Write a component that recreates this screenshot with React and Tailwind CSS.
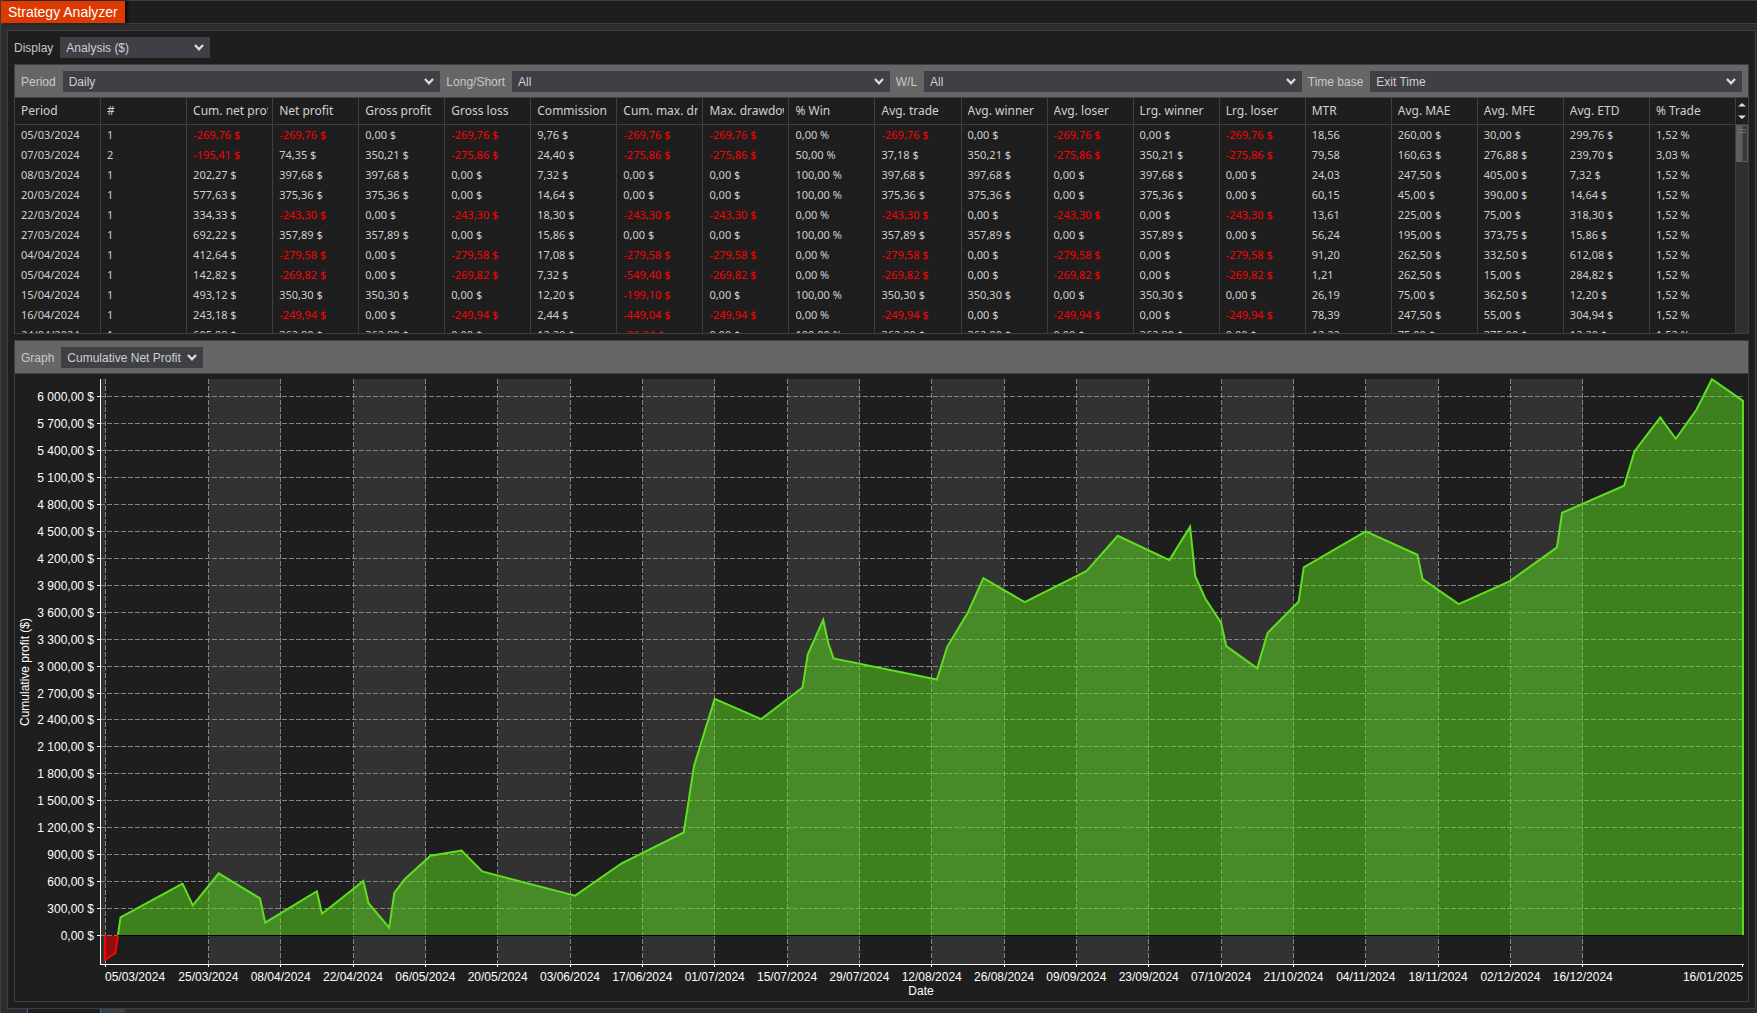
import clsx from 'clsx'

const COLUMNS = [
  'Period', '#', 'Cum. net profit', 'Net profit', 'Gross profit', 'Gross loss', 'Commission',
  'Cum. max. drawdown', 'Max. drawdown', '% Win', 'Avg. trade', 'Avg. winner', 'Avg. loser',
  'Lrg. winner', 'Lrg. loser', 'MTR', 'Avg. MAE', 'Avg. MFE', 'Avg. ETD', '% Trade',
]

// period, count, cum, net, commission, cum dd, % win, avg trade, winner, loser, MTR, MAE, MFE, ETD, % trade
const TRADES = [
  ['05/03/2024', '1', '-269,76', '-269,76', '9,76', '-269,76', '0,00', '-269,76', '0,00', '-269,76', '18,56', '260,00', '30,00', '299,76', '1,52'],
  ['07/03/2024', '2', '-195,41', '74,35', '24,40', '-275,86', '50,00', '37,18', '350,21', '-275,86', '79,58', '160,63', '276,88', '239,70', '3,03'],
  ['08/03/2024', '1', '202,27', '397,68', '7,32', '0,00', '100,00', '397,68', '397,68', '0,00', '24,03', '247,50', '405,00', '7,32', '1,52'],
  ['20/03/2024', '1', '577,63', '375,36', '14,64', '0,00', '100,00', '375,36', '375,36', '0,00', '60,15', '45,00', '390,00', '14,64', '1,52'],
  ['22/03/2024', '1', '334,33', '-243,30', '18,30', '-243,30', '0,00', '-243,30', '0,00', '-243,30', '13,61', '225,00', '75,00', '318,30', '1,52'],
  ['27/03/2024', '1', '692,22', '357,89', '15,86', '0,00', '100,00', '357,89', '357,89', '0,00', '56,24', '195,00', '373,75', '15,86', '1,52'],
  ['04/04/2024', '1', '412,64', '-279,58', '17,08', '-279,58', '0,00', '-279,58', '0,00', '-279,58', '91,20', '262,50', '332,50', '612,08', '1,52'],
  ['05/04/2024', '1', '142,82', '-269,82', '7,32', '-549,40', '0,00', '-269,82', '0,00', '-269,82', '1,21', '262,50', '15,00', '284,82', '1,52'],
  ['15/04/2024', '1', '493,12', '350,30', '12,20', '-199,10', '100,00', '350,30', '350,30', '0,00', '26,19', '75,00', '362,50', '12,20', '1,52'],
  ['16/04/2024', '1', '243,18', '-249,94', '2,44', '-449,04', '0,00', '-249,94', '0,00', '-249,94', '78,39', '247,50', '55,00', '304,94', '1,52'],
  ['24/04/2024', '1', '605,98', '362,80', '12,20', '-86,24', '100,00', '362,80', '362,80', '0,00', '12,22', '75,00', '375,00', '12,20', '1,52'],
]

function toCells(t) {
  const [period, count, cum, net, comm, cumDd, win, avg, winner, loser, mtr, mae, mfe, etd, share] = t
  const usd = (v) => v + ' $'
  return [
    period, count, usd(cum), usd(net), usd(winner), usd(loser), usd(comm), usd(cumDd), usd(loser),
    win + ' %', usd(avg), usd(winner), usd(loser), usd(winner), usd(loser), mtr,
    usd(mae), usd(mfe), usd(etd), share + ' %',
  ]
}

// [days since the first trade, cumulative net profit]
const PROFIT = [
  [0, -269.76], [2, -195.41], [3, 202.27], [15, 577.63], [17, 334.33], [22, 692.22], [30, 412.64],
  [31, 142.82], [41, 493.12], [42, 243.18], [50, 605.98], [51, 359], [55, 88], [56, 475], [58, 627],
  [63, 889], [69, 947], [73, 713], [91, 444], [100, 804], [112, 1147], [114, 1889], [118, 2635],
  [127, 2410], [135, 2762], [136, 3129], [139, 3514], [140, 3252], [141, 3086], [161, 2850],
  [163, 3215], [167, 3597], [170, 3980], [178, 3712], [190, 4061], [196, 4451], [206, 4180],
  [210, 4551], [211, 4002], [213, 3746], [216, 3483], [217, 3223], [223, 2975], [225, 3369],
  [231, 3716], [232, 4100], [244, 4500], [254, 4240], [255, 3969], [262, 3690], [272, 3950],
  [281, 4322], [282, 4707], [294, 5008], [296, 5390], [301, 5769], [304, 5531], [308, 5855],
  [311, 6194], [317, 5954],
]

const DATES = [
  [0, '05/03/2024'], [20, '25/03/2024'], [34, '08/04/2024'], [48, '22/04/2024'], [62, '06/05/2024'],
  [76, '20/05/2024'], [90, '03/06/2024'], [104, '17/06/2024'], [118, '01/07/2024'], [132, '15/07/2024'],
  [146, '29/07/2024'], [160, '12/08/2024'], [174, '26/08/2024'], [188, '09/09/2024'], [202, '23/09/2024'],
  [216, '07/10/2024'], [230, '21/10/2024'], [244, '04/11/2024'], [258, '18/11/2024'], [272, '02/12/2024'],
  [286, '16/12/2024'],
]
const LAST_DAY = 317

const AXIS_X = 85
const TOP = 5
const BOTTOM = 590
const ZERO = 561

const px = (day) => 90 + day * 5.167
const py = (value) => ZERO + 0.5 - value * 0.0898
const snap = (n) => Math.floor(n) + 0.5

function money(v) {
  const s = v >= 1000 ? `${Math.floor(v / 1000)} ${String(v % 1000).padStart(3, '0')}` : String(v)
  return s + ',00 $'
}

function ProfitChart() {
  const line = PROFIT.map(([d, v]) => `L${px(d)} ${py(v)}`).join('')
  const path = `M${px(0)} ${py(0)}${line}L${px(LAST_DAY)} ${py(0)}`
  const levels = Array.from({ length: 21 }, (_, i) => i * 300)
  const bands = []
  for (let i = 1; i < DATES.length - 1; i += 2) bands.push([DATES[i][0], DATES[i + 1][0]])

  return (
    <svg
      viewBox="0 0 1733 627"
      className="block w-full font-['Liberation_Sans',sans-serif] text-[12px]"
      role="img"
      aria-label="Cumulative profit by date"
    >
      <defs>
        <clipPath id="gain">
          <rect x="0" y="0" width="1733" height={ZERO} />
        </clipPath>
        <clipPath id="loss">
          <rect x="0" y={ZERO} width="1733" height="66" />
        </clipPath>
      </defs>

      <g fill="#323232" shapeRendering="crispEdges">
        <rect x={AXIS_X} y={TOP} width="5" height={BOTTOM - TOP} />
        {bands.map(([a, b]) => (
          <rect key={a} x={snap(px(a))} y={TOP} width={px(b) - px(a)} height={BOTTOM - TOP} />
        ))}
      </g>

      <g stroke="#848484" strokeDasharray="5 2" shapeRendering="crispEdges">
        {levels.map((v) => (
          <line key={v} x1={AXIS_X} x2={px(LAST_DAY)} y1={snap(py(v))} y2={snap(py(v))} />
        ))}
        {DATES.map(([d]) => (
          <line key={d} x1={snap(px(d))} x2={snap(px(d))} y1={TOP} y2={BOTTOM} />
        ))}
      </g>

      <g clipPath="url(#gain)">
        <path d={path} fill="#5ee01e" fillOpacity="0.5" />
        <path d={path} fill="none" stroke="#5ee01e" strokeWidth="2" />
      </g>
      <g clipPath="url(#loss)">
        <path d={path} fill="#ff0000" fillOpacity="0.5" />
        <path d={path} fill="none" stroke="#ff0000" strokeWidth="2" />
      </g>
      <line x1="103" x2={px(LAST_DAY)} y1={ZERO + 0.5} y2={ZERO + 0.5} stroke="#000" />

      <g stroke="#fff" shapeRendering="crispEdges">
        <line x1={AXIS_X + 0.5} x2={AXIS_X + 0.5} y1={TOP} y2={BOTTOM + 1} />
        <line x1={AXIS_X} x2={px(LAST_DAY) + 1} y1={BOTTOM + 0.5} y2={BOTTOM + 0.5} />
        {levels.map((v) => (
          <line key={v} x1={AXIS_X - 3} x2={AXIS_X} y1={snap(py(v))} y2={snap(py(v))} />
        ))}
        {[...DATES.map(([d]) => d), LAST_DAY].map((d) => (
          <line key={d} x1={snap(px(d))} x2={snap(px(d))} y1={BOTTOM} y2={BOTTOM + 3} />
        ))}
      </g>

      <g fill="#fff">
        {levels.map((v) => (
          <text key={v} x="79" y={snap(py(v)) + 4} textAnchor="end">{money(v)}</text>
        ))}
        {DATES.map(([d, label]) => (
          <text key={d} x={px(d)} y="607" textAnchor={d === 0 ? 'start' : 'middle'}>{label}</text>
        ))}
        <text x={px(LAST_DAY)} y="607" textAnchor="end">16/01/2025</text>
        <text x="906" y="621" textAnchor="middle">Date</text>
        <text transform="translate(14 298) rotate(-90)" textAnchor="middle">Cumulative profit ($)</text>
      </g>
    </svg>
  )
}

function Picker({ id, label, options, className }) {
  return (
    <>
      <label htmlFor={id} className="shrink-0 pr-px">{label}</label>
      <div className={clsx('relative h-[21px]', className)}>
        <select
          id={id}
          className="block h-full w-full appearance-none bg-[#3f3f46] pr-[22px] pl-1.5 text-[#d0d0d0] outline-none"
        >
          {options.map((o) => (
            <option key={o}>{o}</option>
          ))}
        </select>
        <svg viewBox="0 0 10 7" className="pointer-events-none absolute top-[7px] right-1.5 h-[7px] w-[10px]">
          <path d="M1 1l4 4.3L9 1" fill="none" stroke="#dedede" strokeWidth="2.2" />
        </svg>
      </div>
    </>
  )
}

function ResultsTable() {
  return (
    <div className="flex h-[235px] overflow-hidden font-['Noto_Sans',sans-serif]">
      <table className="w-full min-w-0 flex-1 table-fixed border-separate border-spacing-0 self-start text-[11px] text-[#d0d0d0]">
        <thead>
          <tr className="h-[27px] text-[12px]">
            {COLUMNS.map((c) => (
              <th
                key={c}
                className="border-r border-b border-[#3f3f41] p-0 pr-1 pl-1.5 text-left font-normal whitespace-nowrap"
              >
                <div className="overflow-hidden">{c}</div>
              </th>
            ))}
          </tr>
        </thead>
        <tbody>
          {TRADES.map((t) => (
            <tr key={t[0]} className="h-5">
              {toCells(t).map((v, i) => (
                <td
                  key={i}
                  className={clsx(
                    'border-r border-[#3f3f41] p-0 pl-1.5 align-top leading-[19px] whitespace-nowrap',
                    v.startsWith('-') && 'text-[#ff0000]'
                  )}
                >
                  {v}
                </td>
              ))}
            </tr>
          ))}
        </tbody>
      </table>
      <div className="flex w-3 shrink-0 flex-col bg-[#2f2f31]">
        <div className="flex h-[27px] flex-col items-center justify-center border-b border-[#3f3f41] bg-[#1e1e1e]">
          <svg viewBox="0 0 8 18" className="h-[18px] w-2">
            <path d="M0 4.5L4 1l4 3.5zM0 13.5L4 17l4-3.5z" fill="#e0e0e0" />
          </svg>
        </div>
        <div className="flex h-[37px] flex-col items-center gap-0.5 border border-[#5c5c5c] bg-linear-to-r from-[#5e5e5e] from-50% to-[#3a3a3a] to-60% pt-[3px]">
          <span className="h-px w-2 bg-[#6e6e6e]" />
          <span className="h-px w-2 bg-[#6e6e6e]" />
        </div>
      </div>
    </div>
  )
}

export default function App() {
  return (
    <div className="flex min-h-screen flex-col border-t border-l border-[#3f3f41] bg-[#2d2d30] font-['Liberation_Sans',sans-serif] text-[12px] text-[#c8c8c8]">
      <header className="flex h-[23px] border-b border-[#3f3f41] bg-[#1e1e1e]">
        <h1 className="bg-[#dc3a00] px-[7px] text-[14px] leading-[22px] text-white shadow-[2px_0_3px_#000]">
          Strategy Analyzer
        </h1>
      </header>

      <main className="mt-1.5 mr-px ml-1.5 flex-1 border border-[#3f3f41] bg-[#1e1e1e] px-1.5 pb-1.5">
        <div className="flex items-center gap-1.5 py-1.5">
          <Picker id="display" label="Display" options={['Analysis ($)', 'Summary', 'Trades']} className="w-[150px]" />
        </div>

        <section className="border border-[#3f3f41]">
          <div className="flex items-center gap-1.5 border-b border-[#3f3f41] bg-[#666] px-1.5 pt-1.5 pb-[5px]">
            <Picker id="period" label="Period" options={['Daily', 'Weekly', 'Monthly']} className="flex-[377]" />
            <Picker id="side" label="Long/Short" options={['All', 'Long', 'Short']} className="flex-[377]" />
            <Picker id="wl" label="W/L" options={['All', 'Winners', 'Losers']} className="flex-[377]" />
            <Picker id="timebase" label="Time base" options={['Exit Time', 'Entry Time']} className="flex-[371]" />
          </div>
          <ResultsTable />
        </section>

        <section className="mt-1.5 border border-[#3f3f41]">
          <div className="flex items-center gap-1.5 border-b border-[#3f3f41] bg-[#666] px-1.5 pt-1.5 pb-[5px]">
            <Picker id="graph" label="Graph" options={['Cumulative Net Profit', 'Drawdown']} />
          </div>
          <ProfitChart />
        </section>
      </main>

      <footer className="flex h-1 pl-[26px]">
        <div className="w-[74px] border-x border-[#007acc] bg-[#1e1e1e]" />
        <div className="w-6 bg-[#3f3f46]" />
      </footer>
    </div>
  )
}
